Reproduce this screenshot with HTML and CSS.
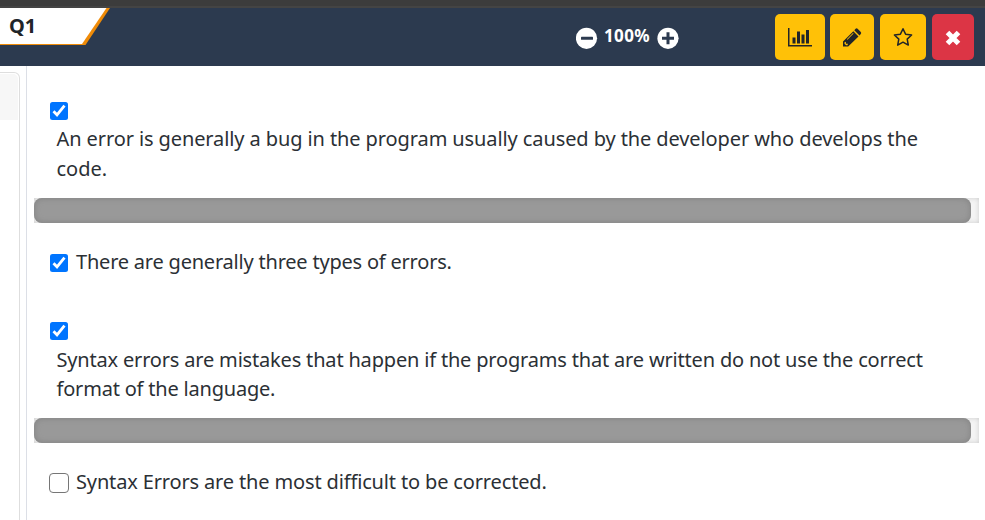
FILE: index.html
```html
<!DOCTYPE html>
<html lang="en">
<head>
<meta charset="utf-8">
<title>Q1</title>
<link rel="stylesheet" href="styles.css">
</head>
<body>
<div class="frame-edge"></div>
<header class="header">
  <div class="tab">
    <svg class="tab-shape" width="110" height="38" viewBox="0 0 110 38"><path fill="#ef8b08" d="M0 0H110L85.500 37H0Z"/><path fill="#fff" d="M0 0H106.500L82 36H0Z"/></svg>
    <span class="tab-label">Q1</span>
  </div>
  <div class="zoom">
    <svg width="22" height="22" viewBox="0 0 22 22"><circle cx="10.500" cy="11.300" r="10.600" fill="#fff"/><rect x="5" y="9.800" width="12" height="3" rx=".6" fill="#2c3a4f"/></svg>
    <span class="zoom-value">100%</span>
    <svg width="22" height="22" viewBox="0 0 22 22"><circle cx="11" cy="11.300" r="10.600" fill="#fff"/><path fill="#2c3a4f" d="M9.500 5.300h3v4.500H17v3h-4.500v4.500h-3v-4.500H5v-3h4.500z"/></svg>
  </div>
  <div class="actions">
    <button class="btn chart" aria-label="Statistics"><svg width="24" height="20" viewBox="0 0 24 20"><path fill="#212529" d="M0 1h1.500v17H24v1.500H0zM4.500 10.500h3v6h-3zM9 4.500h3v12H9zM13.500 7.500h3v9h-3zM18 3h3v13.500h-3z"/></svg></button>
    <button class="btn edit" aria-label="Edit"><svg width="20" height="20" viewBox="0 0 20 20"><path fill="#212529" d="M1 19.500V14.500L11.300 4.200l5.200 5.200L6.200 19.500zM12.300 3.200l1.300-1.400q1-.9 2 0l3.200 3.200q.9 1 0 2l-1.300 1.400z"/><path fill="#ffc107" d="M2.500 15.200l1.400-.4v2h2l-.4 1.500H4.200l-1.700-1.600zM11 6l.6.6-6.200 6.200-.6-.6z"/></svg></button>
    <button class="btn star" aria-label="Favourite"><svg width="20" height="20" viewBox="0 0 20 20"><path fill="none" stroke="#212529" stroke-width="1.500" stroke-linejoin="round" d="M10 1.800l2.600 5.400 6 .8-4.400 4.100 1.100 6L10 15.200l-5.300 2.900 1.100-6L1.400 8l6-.8z"/></svg></button>
    <button class="btn close" aria-label="Close"><svg width="16" height="16" viewBox="0 0 16 16"><path fill="none" stroke="#fff" stroke-width="5" stroke-linejoin="round" d="M2.500 2.500l11 11M13.500 2.500l-11 11"/></svg></button>
  </div>
</header>
<main class="main">
  <aside class="side"><div class="card"><div class="card-head"></div></div></aside>
  <section class="content">
    <div class="option block first">
      <span class="check checked"><svg width="18" height="18" viewBox="0 0 18 18"><path d="M3.500 9.300l3.500 3.500 7.500-9.200"/></svg></span>
      <p class="text l1">An error is generally a bug in the program usually caused by the developer who develops the<br><span class="l2">code.</span></p>
    </div>
    <div class="track"><div class="thumb"></div></div>
    <div class="option inline">
      <span class="check checked"><svg width="18" height="18" viewBox="0 0 18 18"><path d="M3.500 9.300l3.500 3.500 7.500-9.200"/></svg></span>
      <span class="text l3">There are generally three types of errors.</span>
    </div>
    <div class="option block second">
      <span class="check checked"><svg width="18" height="18" viewBox="0 0 18 18"><path d="M3.500 9.300l3.500 3.500 7.500-9.200"/></svg></span>
      <p class="text l4">Syntax errors are mistakes that happen if the programs that are written do not use the correct<br><span class="l5">format of the language.</span></p>
    </div>
    <div class="track"><div class="thumb"></div></div>
    <div class="option inline last">
      <span class="check"></span>
      <span class="text l6">Syntax Errors are the most difficult to be corrected.</span>
    </div>
  </section>
</main>
</body>
</html>
```
FILE: styles.css
```css
* { box-sizing: border-box; }
body { margin: 0; height: 520px; overflow: hidden; background: #fff; color: #2b3035; font-family: "Noto Sans", sans-serif; }
svg { display: block; }
.frame-edge { height: 8px; background: #3c3c3c; border-bottom: 2px solid #444; }
.header { height: 58px; background: #2c3a4f; display: flex; align-items: flex-start; }
.tab { display: grid; width: 110px; }
.tab > * { grid-area: 1 / 1; }
.tab-label { padding-left: 9px; font-size: 20px; line-height: 36px; font-weight: 700; color: #212529; }
.zoom { display: flex; margin: 19px 0 0 466px; }
.zoom-value { width: 48px; margin: -2px 5px 0 6px; font-size: 17px; line-height: 22px; font-weight: 700; letter-spacing: 0.4px; color: #fff; white-space: nowrap; }
.zoom svg { flex: none; }
.actions { display: flex; margin: 6px 0 0 96px; }
.btn { display: flex; align-items: center; justify-content: center; height: 46px; padding: 0; border: 0; border-radius: 5px; background: #ffc107; }
.chart { width: 50px; margin-right: 5px; }
.edit { width: 44px; margin-right: 6px; }
.star { width: 46px; margin-right: 6px; }
.close { width: 42px; background: #dc3545; padding-top: 2px; }
.main { display: flex; height: 454px; }
.side { width: 27px; padding-top: 6px; border-right: 1px solid #dcdfe6; }
.card { width: 20px; height: 460px; border: 1px solid #dedede; border-left: 0; border-top-right-radius: 6px; padding: 1px 1px 0 0; }
.card-head { height: 46px; background: #f7f7f7; border-top-right-radius: 5px; }
.content { flex: 1; padding-left: 7px; }
.option { padding-left: 16px; }
.first { height: 132px; padding-top: 36px; }
.second { height: 132px; padding-top: 36px; }
.check { display: block; width: 20px; height: 20px; margin: 0 -1px; flex: none; border: 1.5px solid #767676; border-radius: 4px; background: #fff; }
.checked { width: 18px; height: 18px; margin: 0; border: 0; border-radius: 2.5px; background: #0075ff; }
.check path { fill: none; stroke: #fff; stroke-width: 2.8; }
.text { margin: 0; font-size: 20px; line-height: 29.5px; white-space: nowrap; }
.block .text { padding: 4px 0 0 6.5px; }
.second .text { padding-top: 5px; line-height: 29px; }
.l1 { letter-spacing: -0.1px; }
.l2 { letter-spacing: 0; }
.l3 { letter-spacing: -0.21px; }
.l4 { letter-spacing: -0.18px; }
.l5 { letter-spacing: -0.2px; }
.l6 { letter-spacing: -0.15px; }
.track { width: 945px; height: 25px; background: #f4f4f4; box-shadow: inset 0 0 5px #ccc; }
.thumb { width: 937px; height: 25px; border-radius: 8px; background: #999; box-shadow: inset 0 0 6px #808080; }
.inline { display: flex; align-items: center; height: 63px; padding-top: 17px; }
.inline .text { padding: 0 0 2px 8px; }
```
